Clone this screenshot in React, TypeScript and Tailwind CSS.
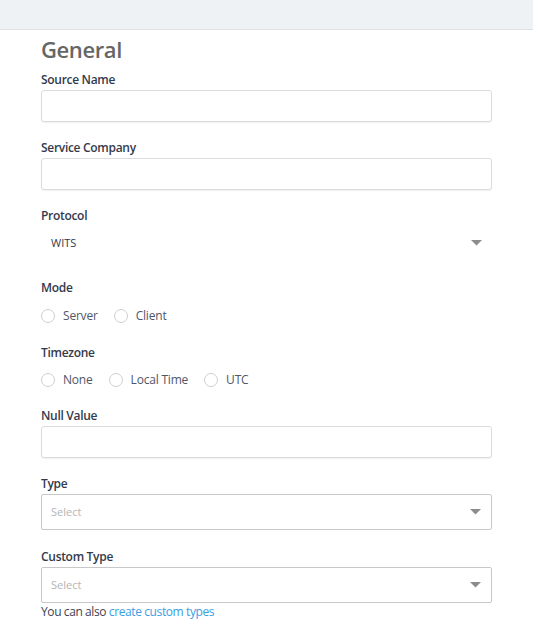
import React from 'react'

const font = { fontFamily: '"Open Sans", "Noto Sans", sans-serif' }

function Label({ children, className = '' }: { children: React.ReactNode; className?: string }) {
  return (
    <div className={`text-[12px] font-semibold leading-[18px] text-[#333a4c] tracking-[-0.3px] ${className}`}>
      {children}
    </div>
  )
}

function Input() {
  return (
    <input
      type="text"
      className="mt-[1px] h-[32px] w-full rounded-[3px] border border-[#dcdcdc] bg-white px-2 text-[12px] shadow-[0_1px_1px_rgba(0,0,0,0.06)] outline-none"
    />
  )
}

function Caret() {
  return (
    <svg width="11" height="6" viewBox="0 0 11 6" className="shrink-0">
      <path d="M0 0 L11 0 L5.5 5.5 Z" fill="#8c8c8c" />
    </svg>
  )
}

function SelectBox() {
  return (
    <div className="mt-[1px] flex h-[36px] items-center justify-between rounded-[2px] border border-[#c8c8c8] bg-white pl-[9px] pr-[10px]">
      <span className="text-[11px] text-[#b4b4b4]">Select</span>
      <Caret />
    </div>
  )
}

function Radio({ text }: { text: string }) {
  return (
    <label className="flex items-center gap-[8px]">
      <span className="h-[14px] w-[14px] rounded-full border border-[#cfcfcf] bg-white" />
      <span className="text-[12px] font-medium leading-[16px] text-[#505668] tracking-[-0.2px]">{text}</span>
    </label>
  )
}

function Radios({ options, className = '' }: { options: string[]; className?: string }) {
  return (
    <div className={`flex h-[16px] items-center gap-[16px] ${className}`}>
      {options.map((o) => (
        <Radio key={o} text={o} />
      ))}
    </div>
  )
}

export default function App() {
  return (
    <div className="h-[631px] w-[533px] overflow-hidden bg-white" style={font}>
      <div className="h-[30px] border-b border-[#dde1e6] bg-[#eff2f5]" />
      <div className="flex flex-col px-[41px]">
        <h2 className="mt-[4px] text-[22px] font-semibold leading-[30px] text-[#666666] tracking-[-0.4px]">
          General
        </h2>

        <Label className="mt-[7px]">Source Name</Label>
        <Input />

        <Label className="mt-[17px]">Service Company</Label>
        <Input />

        <Label className="mt-[17px]">Protocol</Label>
        <div className="mt-[6px] flex h-[24px] items-center justify-between pl-[10px] pr-[10px]">
          <span className="text-[11px] text-[#333a4c]">WITS</span>
          <Caret />
        </div>

        <Label className="mt-[24px]">Mode</Label>
        <Radios className="mt-[11px]" options={['Server', 'Client']} />

        <Label className="mt-[20px]">Timezone</Label>
        <Radios className="mt-[10px]" options={['None', 'Local Time', 'UTC']} />

        <Label className="mt-[19px]">Null Value</Label>
        <Input />

        <Label className="mt-[17px]">Type</Label>
        <SelectBox />

        <Label className="mt-[18px]">Custom Type</Label>
        <SelectBox />
        <div className="mt-[1px] text-[12px] leading-[16px] text-[#3d4354] tracking-[-0.4px]">
          You can also{' '}
          <a className="text-[#3b9ee3]" href="#">
            create custom types
          </a>
        </div>
      </div>
    </div>
  )
}
